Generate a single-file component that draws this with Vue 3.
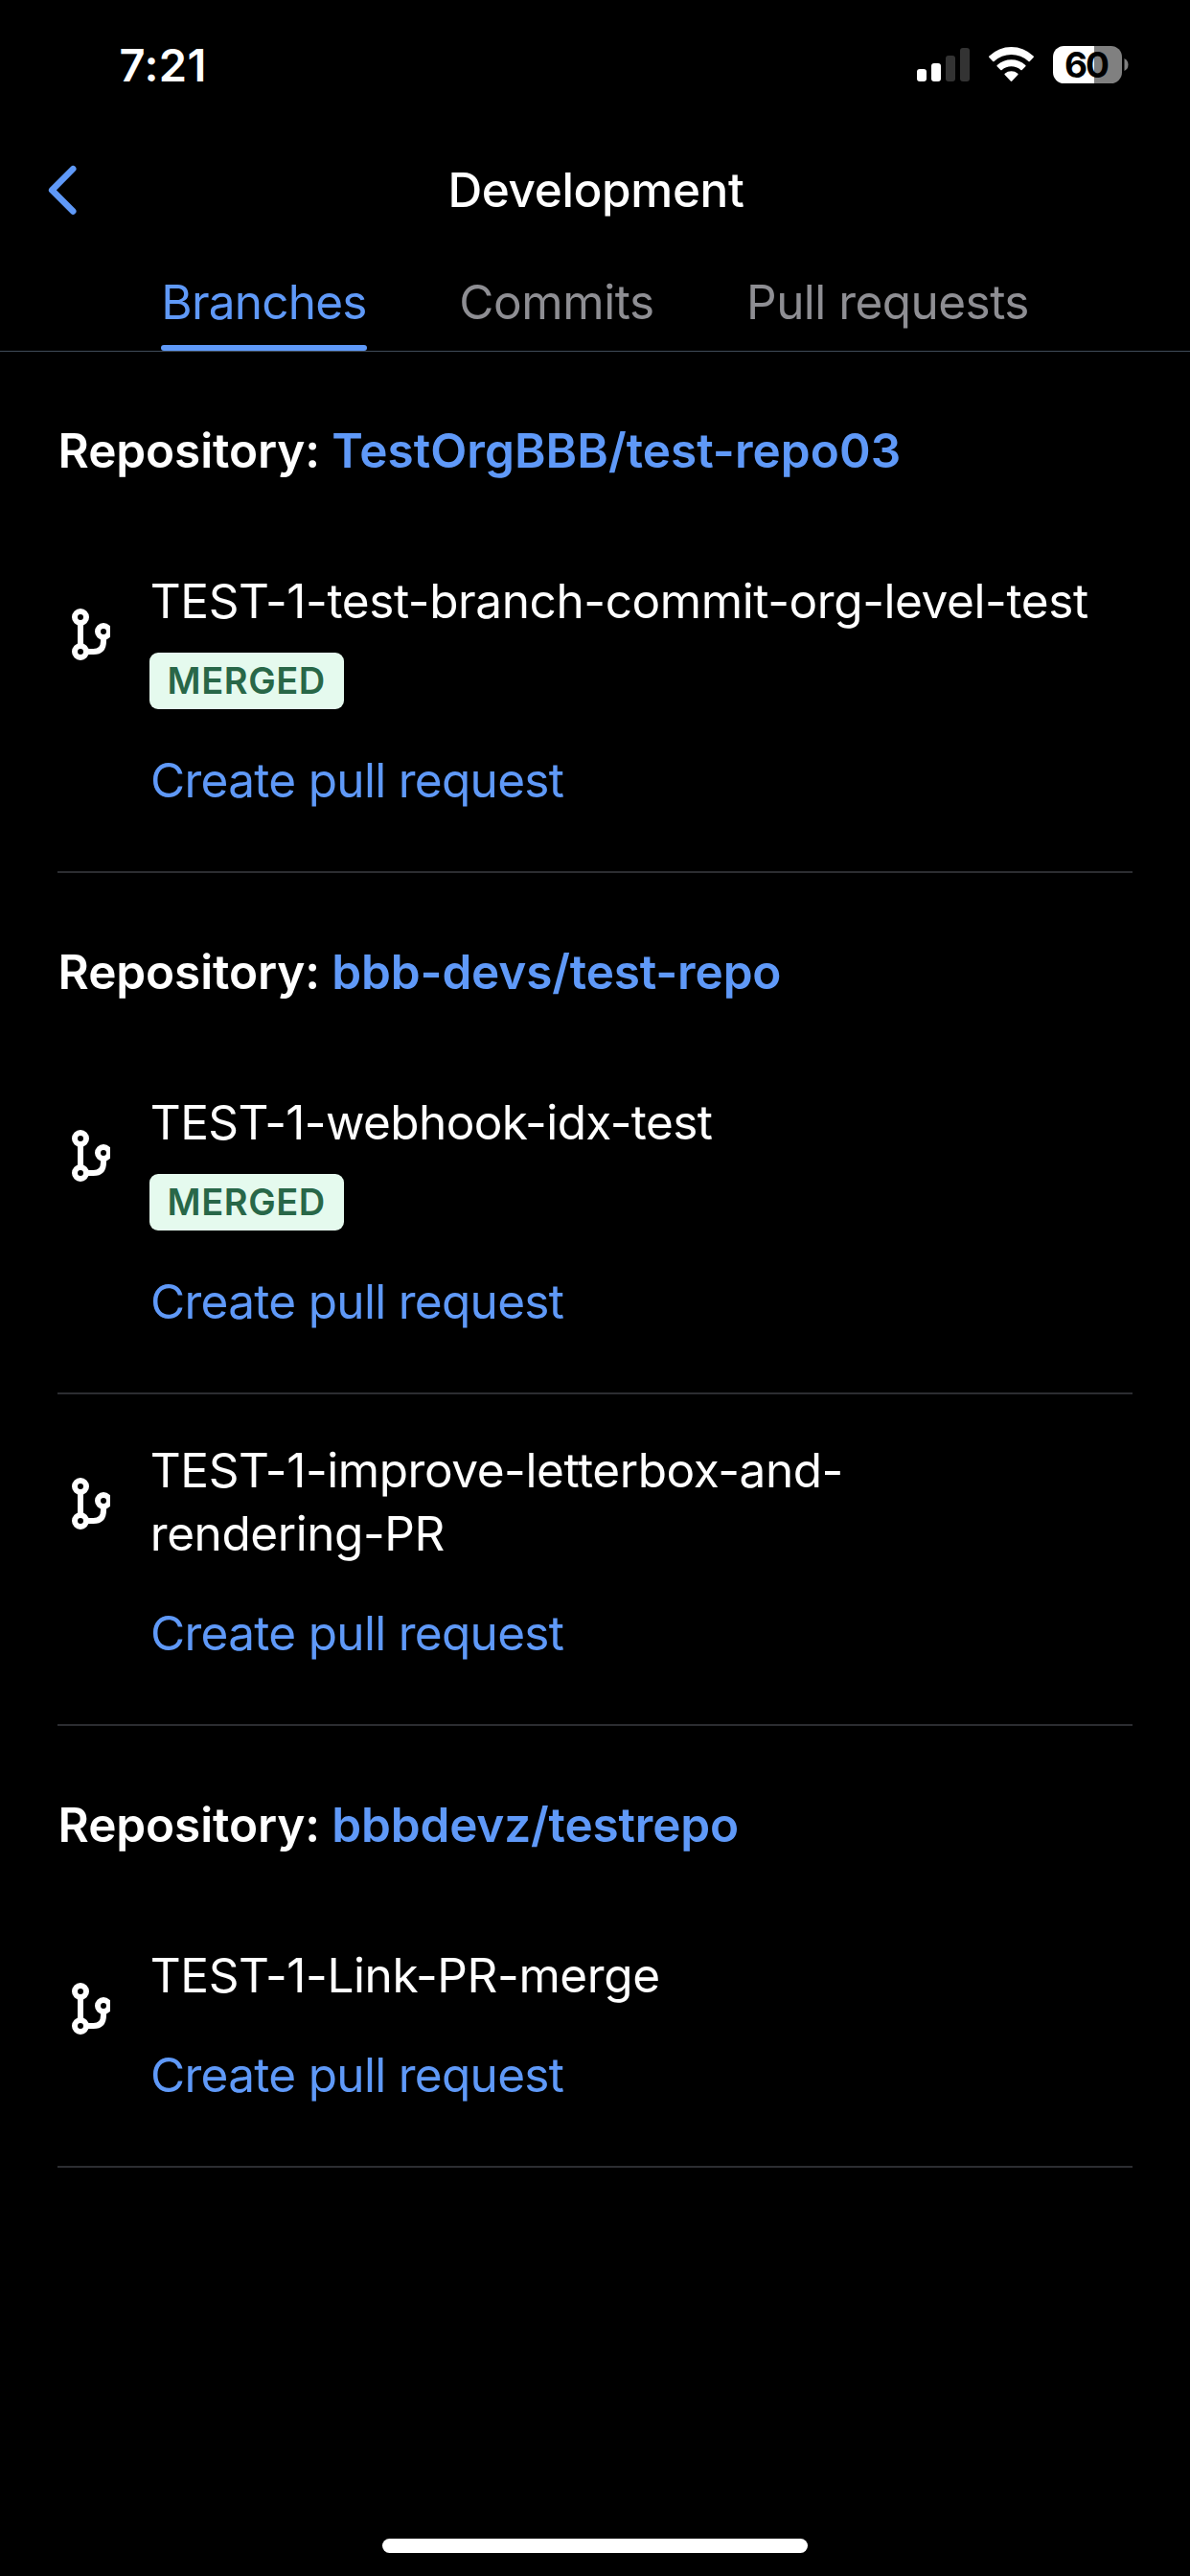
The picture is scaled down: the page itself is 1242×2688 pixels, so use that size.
<script setup>
import { ref } from 'vue'

const tabs = [
  { id: 'branches', label: 'Branches' },
  { id: 'commits', label: 'Commits' },
  { id: 'pulls', label: 'Pull requests' },
]
const active = ref('branches')

// tracking: letter spacing in px for each name
const repositories = [
  {
    name: 'TestOrgBBB/test-repo03',
    tracking: 0.035,
    branches: [{ name: 'TEST-1-test-branch-commit-org-level-test', tracking: -0.4, merged: true }],
  },
  {
    name: 'bbb-devs/test-repo',
    tracking: -0.16,
    branches: [
      { name: 'TEST-1-webhook-idx-test', tracking: -0.605, merged: true },
      { name: 'TEST-1-improve-letterbox-and-\nrendering-PR', tracking: -0.43, merged: false },
    ],
  },
  {
    name: 'bbbdevz/testrepo',
    tracking: -0.185,
    branches: [{ name: 'TEST-1-Link-PR-merge', tracking: -0.399, merged: false }],
  },
]
</script>

<template>
  <div class="screen">
    <header class="status">
      <span class="time">7:21</span>
      <div class="indicators">
        <svg width="55" height="39" viewBox="0 0 55 39">
          <rect x="0" y="24" width="10" height="13" rx="3" fill="#fff" />
          <rect x="15" y="18" width="10" height="19" rx="3" fill="#fff" />
          <rect x="30" y="10" width="10" height="27" rx="3" fill="#333" />
          <rect x="45" y="2" width="10" height="35" rx="3" fill="#333" />
        </svg>
        <svg width="47" height="39" viewBox="0 0 47 39" fill="#fff">
          <path d="M.4 11.9Q-.3 11.2.4 10.5A33 33 0 0 1 46.6 10.5Q47.3 11.2 46.6 11.9L42.8 16Q42.1 16.7 41.4 16A26.5 26.5 0 0 0 5.6 16Q4.9 16.7 4.2 16Z" />
          <path d="M8.6 21.3Q8 20.6 8.7 19.9A22 22 0 0 1 38.3 19.9Q39 20.6 38.4 21.3L34.7 25Q34 25.7 33.3 25A15 15 0 0 0 13.7 25Q13 25.7 12.3 25Z" />
          <path d="M16.6 30Q16 29.4 16.7 28.7A11 11 0 0 1 30.3 28.7Q31 29.4 30.4 30L24.3 36.5Q23.5 37.3 22.7 36.5Z" />
        </svg>
        <div class="battery">
          <span class="cell">60</span>
          <svg width="5" height="13" viewBox="0 0 5 13">
            <path d="M.5 0Q4.5 2 4.5 6.5T.5 13Z" fill="#808080" />
          </svg>
        </div>
      </div>
    </header>

    <nav class="navbar">
      <button class="back" aria-label="Back">
        <svg width="31" height="53" viewBox="0 0 31 53">
          <path d="M26.2 4.2 4.2 26.4 26.2 48.4" fill="none" stroke="#5f99f8" stroke-width="6.6" stroke-linecap="round" stroke-linejoin="round" />
        </svg>
      </button>
      <h1>Development</h1>
    </nav>

    <div class="tabs">
      <button
        v-for="tab in tabs"
        :key="tab.id"
        class="tab"
        :class="[tab.id, { active: active === tab.id }]"
        @click="active = tab.id"
      >{{ tab.label }}</button>
    </div>

    <main>
      <section v-for="repo in repositories" :key="repo.name">
        <h2>Repository: <a :style="{ letterSpacing: repo.tracking + 'px' }">{{ repo.name }}</a></h2>
        <article v-for="branch in repo.branches" :key="branch.name" class="branch">
          <svg class="icon" width="40" height="54" viewBox="0 0 40 54" fill="none" stroke="#fff" stroke-width="6">
            <circle cx="9" cy="9" r="6" />
            <circle cx="9" cy="45" r="6" />
            <circle cx="33" cy="24" r="6" />
            <path d="M9 15V39M15 45H22.5Q33 45 33 34V30" />
          </svg>
          <div class="info">
            <p class="name" :style="{ letterSpacing: branch.tracking + 'px' }">{{ branch.name }}</p>
            <span v-if="branch.merged" class="badge">MERGED</span>
            <a class="create">Create pull request</a>
          </div>
        </article>
      </section>
    </main>

    <footer class="home"><span></span></footer>
  </div>
</template>

<style>
body {
  background: #000;
}
</style>

<style scoped>
.screen {
  display: flex;
  flex-direction: column;
  width: 1242px;
  height: 2688px;
  background: #000;
  color: #fff;
  font-family: Inter, "Liberation Sans", sans-serif;
  font-size: 49.5px;
  line-height: 66px;
}
.status {
  display: flex;
  justify-content: space-between;
  align-items: flex-start;
  box-sizing: border-box;
  height: 132px;
  padding: 40px 64px 0 124.5px;
}
.time {
  font-size: 47px;
  font-weight: 600;
  line-height: 56px;
  letter-spacing: 0.4px;
}
.indicators {
  display: flex;
  gap: 20px;
  margin-top: 8px;
}
.indicators svg {
  display: block;
}
.battery {
  display: flex;
  align-items: center;
  gap: 2px;
  height: 39px;
}
.cell {
  box-sizing: border-box;
  width: 72px;
  height: 39px;
  padding-left: 12px;
  border-radius: 11.5px;
  background: linear-gradient(to right, #fff 43px, #808080 43px);
  color: #000;
  font-size: 37px;
  font-weight: 650;
  line-height: 39px;
  letter-spacing: -2px;
}
.navbar {
  display: grid;
  grid-template-columns: 120px 1fr 120px;
  align-items: center;
  height: 132px;
}
.back {
  display: flex;
  margin: 0;
  padding: 0 0 0 50px;
  border: 0;
  background: none;
}
h1 {
  margin: 0;
  padding-left: 2px;
  font-size: 49.5px;
  font-weight: 500;
  letter-spacing: -0.37px;
  text-align: center;
}
.tabs {
  display: flex;
  justify-content: center;
  gap: 96px;
  padding-top: 18px;
  border-bottom: 1px solid #3f4c59;
}
.tab {
  display: flex;
  flex-direction: column;
  height: 84px;
  margin: 0;
  padding: 0;
  border: 0;
  background: none;
  color: #8e8e93;
  font: inherit;
  white-space: nowrap;
}
.tab::after {
  content: "";
  width: 100%;
  height: 6px;
  margin-top: 12px;
  border-radius: 3px;
}
.tab.active {
  color: #5f99f8;
}
.tab.active::after {
  background: #5f99f8;
}
.branches {
  width: 215px;
  letter-spacing: -0.767px;
}
.commits {
  width: 204px;
  letter-spacing: -0.393px;
}
.pulls {
  width: 295px;
  letter-spacing: -0.536px;
}
main {
  flex: 1;
  padding: 0 60px;
}
h2 {
  margin: 0;
  padding: 70px 0 45px 0.6px;
  font-size: 49.5px;
  font-weight: 600;
  letter-spacing: -0.11px;
}
a {
  color: #5f99f8;
}
.branch {
  display: flex;
  align-items: flex-start;
  padding: 46px 0 62px;
  border-bottom: 2px solid #2c2d31;
}
.icon {
  flex: none;
  margin: 41px 41px 0 15px;
}
.info {
  display: flex;
  flex-direction: column;
  align-items: flex-start;
  width: 1000px;
}
.name {
  margin: 0;
  padding-left: 0.8px;
  white-space: pre-line;
}
.badge {
  box-sizing: border-box;
  width: 203px;
  height: 59px;
  margin: 21px 0 3px;
  padding-left: 18.5px;
  border-radius: 9px;
  background: #e5faee;
  color: #286748;
  font-size: 38px;
  font-weight: 600;
  line-height: 59px;
  letter-spacing: 0.6px;
}
.create {
  margin-top: 38px;
  padding-left: 1px;
  letter-spacing: -0.7px;
}
.home {
  display: flex;
  justify-content: center;
  padding-bottom: 24px;
}
.home span {
  width: 444px;
  height: 15px;
  border-radius: 8px;
  background: #fff;
}
</style>
